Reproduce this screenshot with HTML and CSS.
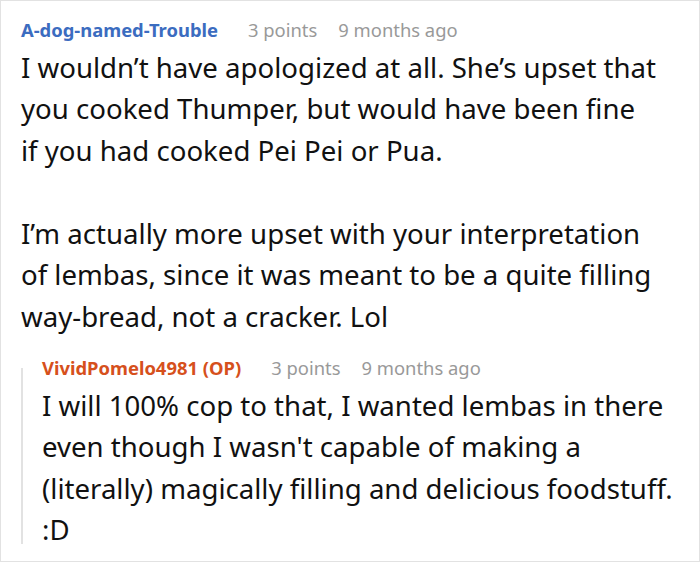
FILE: index.html
```html
<!DOCTYPE html>
<html lang="en">
<head>
<meta charset="utf-8">
<title>Comment thread</title>
<link rel="stylesheet" href="styles.css">
</head>
<body>
<div class="thread">
  <div class="comment">
    <div class="meta">
      <span class="author">A-dog-named-Trouble</span>
      <span class="points">3 points</span>
      <span class="time">9 months ago</span>
    </div>
    <div class="body">
      <p>I wouldn’t have apologized at all. She’s upset that<br>you cooked Thumper, but would have been fine<br>if you had cooked Pei Pei or Pua.</p>
      <p>I’m actually more upset with your interpretation<br>of lembas, since it was meant to be a quite filling<br>way-bread, not a cracker. Lol</p>
    </div>
    <div class="reply">
      <div class="rail"></div>
      <div class="comment-inner">
        <div class="meta">
          <span class="author op">VividPomelo4981 (OP)</span>
          <span class="points">3 points</span>
          <span class="time">9 months ago</span>
        </div>
        <div class="body">
          <p>I will 100% cop to that, I wanted lembas in there<br>even though I wasn't capable of making a<br>(literally) magically filling and delicious foodstuff.<br>:D</p>
        </div>
      </div>
    </div>
  </div>
</div>
</body>
</html>
```
FILE: styles.css
```css
html, body {
  margin: 0;
  padding: 0;
  background: #fff;
}
body {
  font-family: "Noto Sans", "Open Sans", sans-serif;
  color: #111;
}
.thread {
  box-sizing: border-box;
  width: 700px;
  height: 562px;
  border: 1px solid #e2e2e2;
  padding: 15px 4px 0 20px;
  overflow: hidden;
}
.meta {
  display: flex;
  align-items: baseline;
  font-size: 18.4px;
  line-height: 27.6px;
  white-space: nowrap;
}
.author {
  font-weight: 700;
  color: #3b6cc0;
  margin-right: 30px;
}
.author.op {
  color: #d6501c;
}
.points, .time {
  color: #999;
}
.points {
  margin-right: 21px;
}
.body {
  margin-top: 3px;
  font-size: 27.6px;
  line-height: 41.5px;
  white-space: nowrap;
}
.body p {
  margin: 0 0 41.5px;
}
.body p:last-child {
  margin-bottom: 0;
}
.reply {
  display: flex;
  margin-top: 17px;
}
.rail {
  flex: 0 0 2px;
  margin: 14px 0 7px;
  background: #e2e2e2;
}
.comment-inner {
  padding-left: 19px;
}
```
